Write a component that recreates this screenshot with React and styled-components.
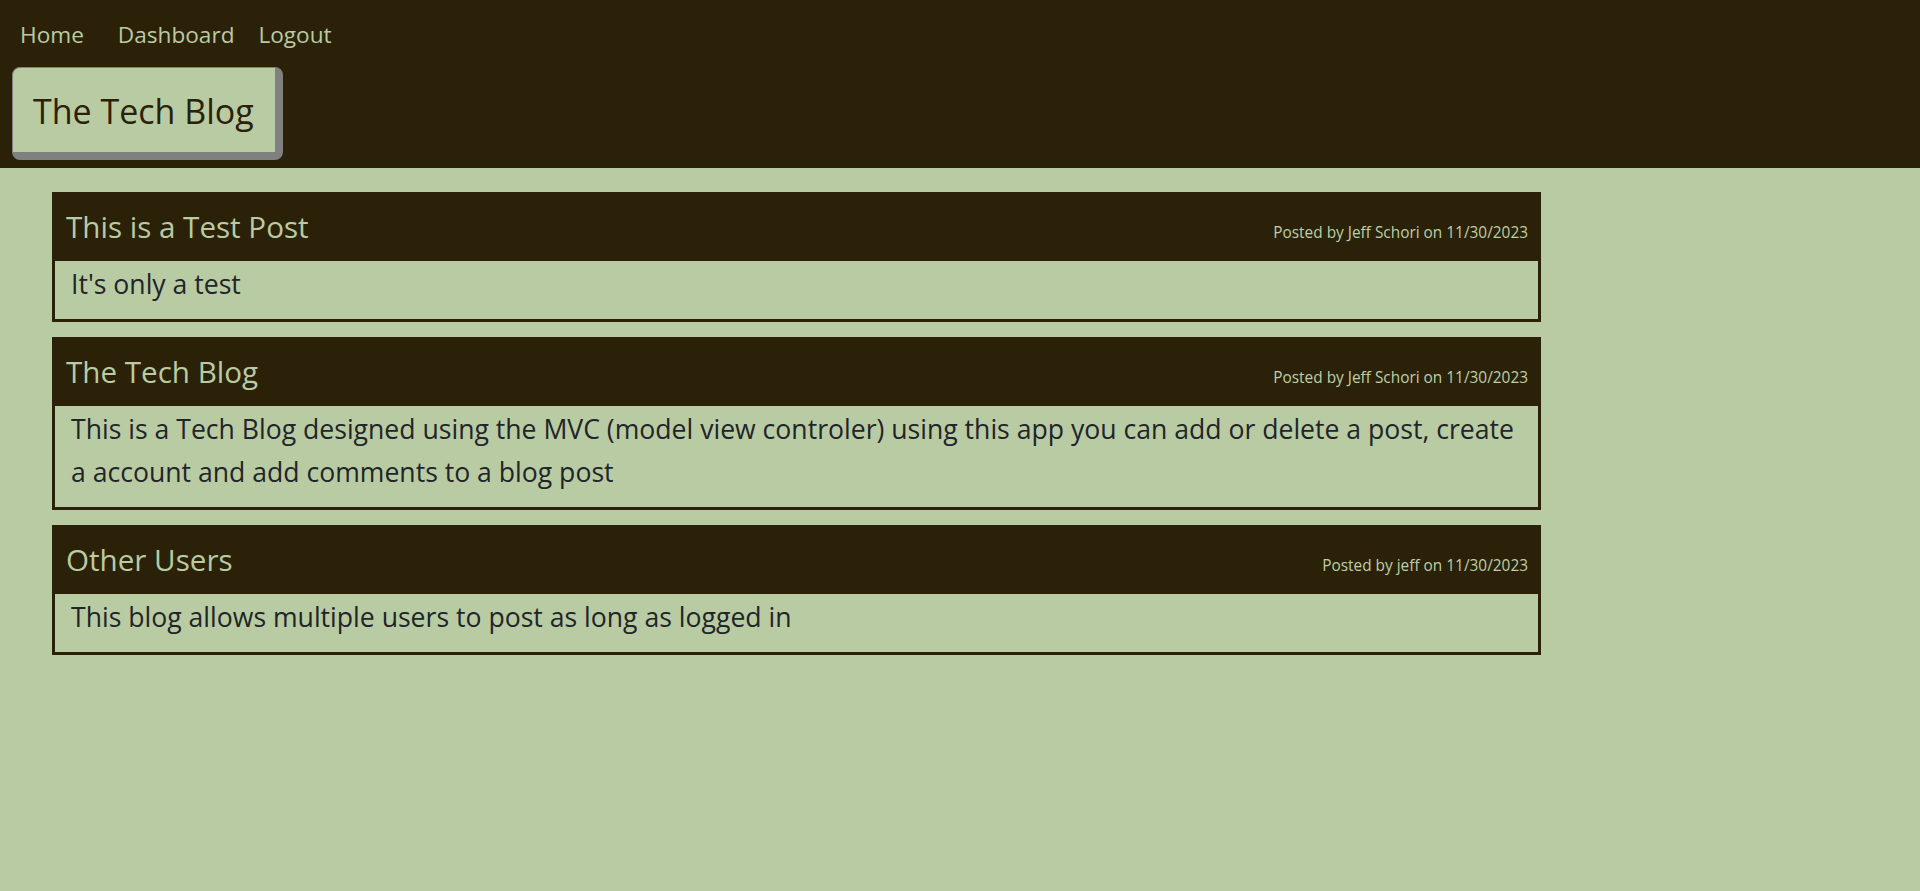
import React from "react";
import styled, { createGlobalStyle } from "styled-components";

const posts = [
    {
        title: "This is a Test Post",
        author: "Jeff Schori",
        date: "11/30/2023",
        body: "It's only a test",
    },
    {
        title: "The Tech Blog",
        author: "Jeff Schori",
        date: "11/30/2023",
        body: "This is a Tech Blog designed using the MVC (model view controler) using this app you can add or delete a post, create a account and add comments to a blog post",
    },
    {
        title: "Other Users",
        author: "jeff",
        date: "11/30/2023",
        body: "This blog allows multiple users to post as long as logged in",
    },
];

function App() {
    return (
        <>
            <GlobalStyle />
            <Header>
                <Nav>
                    <NavLink href="#" $gap={34}>Home</NavLink>
                    <NavLink href="#" $gap={24}>Dashboard</NavLink>
                    <NavLink href="#">Logout</NavLink>
                </Nav>
                <Brand>The Tech Blog</Brand>
            </Header>
            <Main>
                {posts.map((post) => (
                    <Card key={post.title}>
                        <CardHeader>
                            <PostTitle>{post.title}</PostTitle>
                            <Meta>
                                Posted by {post.author} on {post.date}
                            </Meta>
                        </CardHeader>
                        <CardBody>
                            <p>{post.body}</p>
                        </CardBody>
                    </Card>
                ))}
            </Main>
        </>
    );
}

const GlobalStyle = createGlobalStyle`
    html, body {
        margin: 0;
        min-height: 100%;
        background-color: #b9cba3;
    }
    body {
        font-family: "Open Sans", "Noto Sans", sans-serif;
        color: #212529;
    }
    * {
        box-sizing: border-box;
    }
`;

const Header = styled.header`
    background-color: #2b2108;
    height: 168px;
    padding: 12px 12px 0 12px;
`;

const Nav = styled.nav`
    display: flex;
    align-items: center;
    height: 45px;
    padding-left: 8px;
`;

const NavLink = styled.a`
    color: #b9cba3;
    text-decoration: none;
    font-size: 22.6px;
    margin-right: ${(p) => (p.$gap ? p.$gap : 0)}px;
`;

const Brand = styled.h1`
    display: inline-block;
    margin: 10px 0 0 0;
    height: 93px;
    padding: 0 21px 0 20px;
    line-height: 86px;
    font-size: 34px;
    font-weight: 400;
    color: #2b2108;
    background-color: #b9cba3;
    border: 1px solid #808080;
    border-right-width: 8px;
    border-bottom-width: 8px;
    border-radius: 8px;
`;

const Main = styled.main`
    padding: 24px 0 0 52px;
`;

const Card = styled.section`
    width: 1489px;
    border: 3px solid #2b2108;
    margin-bottom: 15px;
`;

const CardHeader = styled.div`
    display: flex;
    justify-content: space-between;
    align-items: baseline;
    background-color: #2b2108;
    height: 66px;
    padding: 11px 10px 0 11px;
`;

const PostTitle = styled.h2`
    margin: 0;
    font-size: 29.6px;
    font-weight: 400;
    color: #b9cba3;
`;

const Meta = styled.span`
    font-size: 15.4px;
    color: #bccfa8;
`;

const CardBody = styled.div`
    padding: 2px 16px 0 16px;

    p {
        margin: 0 0 13px 0;
        font-size: 26.6px;
        line-height: 43px;
        color: #212529;
    }
`;

export default App;
